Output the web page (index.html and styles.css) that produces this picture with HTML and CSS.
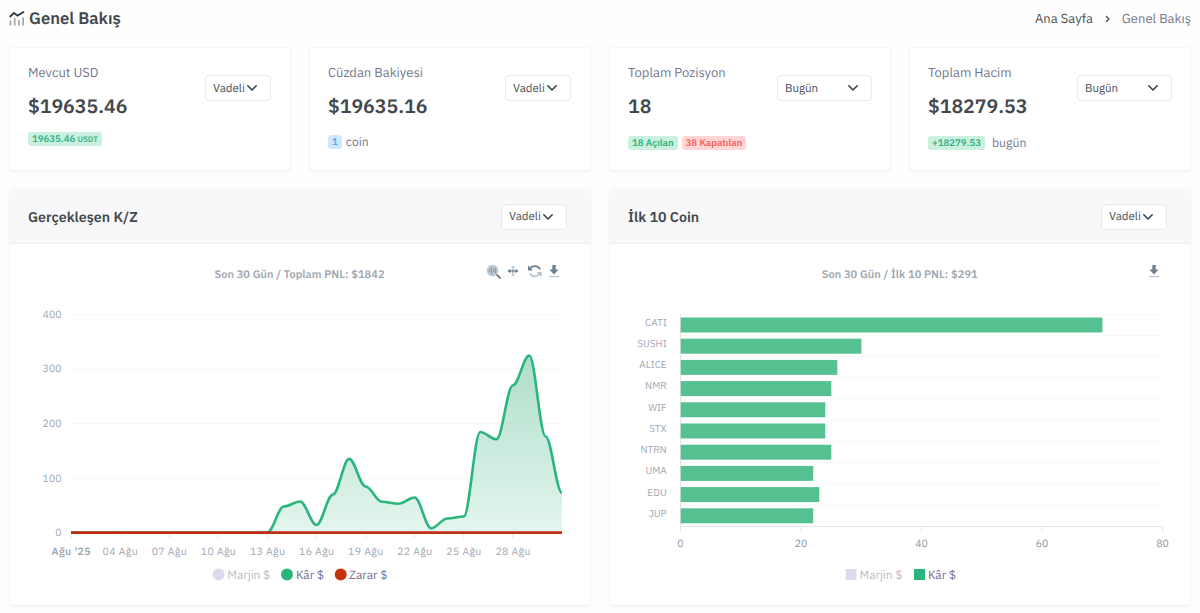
FILE: index.html
```html
<!DOCTYPE html>
<html lang="tr">
<head>
   <meta charset="UTF-8">
   <meta name="viewport" content="width=device-width, initial-scale=1.0">
   <title>Genel Bakış</title>
   <link rel="stylesheet" href="styles.css">
</head>

<body>
   <svg class="defs" width="0" height="0">
      <symbol id="chevron" viewBox="0 0 10 6">
         <path d="M.8 .8L5 5l4.200-4.200" fill="none" stroke="#343a40" stroke-width="1.5" stroke-linecap="round" stroke-linejoin="round"/>
      </symbol>
      <symbol id="download" viewBox="0 0 12 14">
         <path d="M4.300 1h3.400v4.500h3L6 10.500 1.300 5.500h3z" fill="#6e8192"/>
         <path d="M1 12.500h10" stroke="#b7c3cd" stroke-width="1.300"/>
      </symbol>
   </svg>

   <header class="top">
      <h1>
         <svg class="logo" width="16" height="15" viewBox="0 0 16 15">
            <path d="M.7 6L5 2l3.500 2.600L15 .8" fill="none" stroke="#343a40" stroke-width="1.800"/>
            <path d="M1.500 9.500v5M5.700 7v7.500M9.900 9v5.500M14.100 6.500v8" stroke="#a3a5a8" stroke-width="1.700"/>
         </svg>
         <span>Genel Bakış</span>
      </h1>
      <nav class="crumbs">
         <a>Ana Sayfa</a>
         <svg width="5" height="8" viewBox="0 0 5 8"><path d="M1 1l3 3-3 3" fill="none" stroke="#495057" stroke-width="1.300"/></svg>
         <span>Genel Bakış</span>
      </nav>
   </header>

   <main>
      <section class="cards">
         <div class="card">
            <div class="info">
               <p class="label">Mevcut USD</p>
               <h2>$19635.46</h2>
               <div class="extra raised"><span class="badge green">19635.46 <small>USDT</small></span></div>
            </div>
            <div class="select"><span>Vadeli</span><svg class="arrow"><use href="#chevron"/></svg></div>
         </div>
         <div class="card">
            <div class="info">
               <p class="label">Cüzdan Bakiyesi</p>
               <h2>$19635.16</h2>
               <div class="extra coin"><span class="badge blue">1</span><span class="muted">coin</span></div>
            </div>
            <div class="select"><span>Vadeli</span><svg class="arrow"><use href="#chevron"/></svg></div>
         </div>
         <div class="card">
            <div class="info">
               <p class="label">Toplam Pozisyon</p>
               <h2>18</h2>
               <div class="extra"><span class="badge green">18 Açılan</span><span class="badge red">38 Kapatılan</span></div>
            </div>
            <div class="select wide"><span>Bugün</span><svg class="arrow"><use href="#chevron"/></svg></div>
         </div>
         <div class="card">
            <div class="info">
               <p class="label">Toplam Hacim</p>
               <h2>$18279.53</h2>
               <div class="extra today"><span class="badge green">+18279.53</span><span class="muted">bugün</span></div>
            </div>
            <div class="select wide"><span>Bugün</span><svg class="arrow"><use href="#chevron"/></svg></div>
         </div>
      </section>

      <section class="panels">
         <div class="panel">
            <div class="panel-head">
               <h3>Gerçekleşen K/Z</h3>
               <div class="select"><span>Vadeli</span><svg class="arrow"><use href="#chevron"/></svg></div>
            </div>
            <svg class="chart" width="580" height="360" viewBox="0 0 580 360">
               <defs>
                  <linearGradient id="fade" x1="0" y1="0" x2="0" y2="1">
                     <stop offset="0" stop-color="#2ca673" stop-opacity=".38"/>
                     <stop offset="1" stop-color="#2ab57d" stop-opacity=".13"/>
                  </linearGradient>
               </defs>
               <text class="title" x="289.500" y="33.400" textLength="170">Son 30 Gün / Toplam PNL: $1842</text>

               <!-- toolbar -->
               <g class="tools">
                  <circle cx="482.500" cy="25.500" r="5.800" fill="#bac6cf"/>
                  <path d="M479.500 24v3M481.500 22.500v6M483.500 24v3M485.500 23v5" stroke="#8798a6"/>
                  <path d="M486.500 29.500l4 4" stroke="#536373" stroke-width="1.700"/>
                  <path d="M503 20.500l2 2.500h-4zM503 31.500l2-2.500h-4z" fill="#bac6cf"/>
                  <path d="M498 26h10" stroke="#6e8192" stroke-width="1.300"/>
                  <path d="M503 23.500v5" stroke="#6e8192"/>
                  <path d="M497.500 26l3-2.300v4.600zM508.500 26l-3-2.300v4.600z" fill="#6e8192"/>
                  <path d="M519.500 24.500c2-4.200 8-4.800 10.800-.3" fill="none" stroke="#6e8192" stroke-width="1.700"/>
                  <path d="M518 20.500v5h5z" fill="#6e8192"/>
                  <path d="M530 28c-2 4.200-7.500 4.500-10.300.5" fill="none" stroke="#b7c3cd" stroke-width="1.700"/>
                  <path d="M531.700 32v-5h-5z" fill="#b7c3cd"/>
                  <use href="#download" x="538" y="19" width="12" height="14"/>
               </g>

               <path class="grid" d="M61 69.500h491M61 124h491M61 178.500h491M61 233h491"/>
               <g class="ticks end">
                  <text x="51.500" y="72.700">400</text>
                  <text x="51.500" y="127.400">300</text>
                  <text x="51.500" y="182">200</text>
                  <text x="51.500" y="236.700">100</text>
                  <text x="51.500" y="291.200">0</text>
               </g>

               <path fill="url(#fade)" d="M257.400 287.500C263.100 287.500 268.100 261.500 273.800 261.500S284.400 256.500 290.100 256.500S300.800 280 306.500 280S317.200 249.500 322.900 249.500S333.500 213.900 339.200 213.900S349.900 241.500 355.600 241.500S366.300 256.800 372 256.800S382.600 258.700 388.300 258.700S399 252.500 404.700 252.500S415.400 283.300 421.100 283.300S431.700 273.500 437.400 273.500S448.100 271.500 453.800 271.500S464.500 187 470.200 187S480.800 194.300 486.500 194.300S497.200 140.200 502.900 140.200S513.600 110.500 519.300 110.500S529.900 191.500 535.600 191.500S546.300 247.800 552 247.800V287.500z"/>
               <path class="profit" d="M61 287.500H257.400C263.100 287.500 268.100 261.500 273.800 261.500S284.400 256.500 290.100 256.500S300.800 280 306.500 280S317.200 249.500 322.900 249.500S333.500 213.900 339.200 213.900S349.900 241.500 355.600 241.500S366.300 256.800 372 256.800S382.600 258.700 388.300 258.700S399 252.500 404.700 252.500S415.400 283.300 421.100 283.300S431.700 273.500 437.400 273.500S448.100 271.500 453.800 271.500S464.500 187 470.200 187S480.800 194.300 486.500 194.300S497.200 140.200 502.900 140.200S513.600 110.500 519.300 110.500S529.900 191.500 535.600 191.500S546.300 247.800 552 247.800"/>
               <path class="loss" d="M61 287.600h491"/>
               <path class="axis" d="M61 289v4M110.100 289v4M159.200 289v4M208.300 289v4M257.400 289v4M306.500 289v4M355.600 289v4M404.700 289v4M453.800 289v4M502.900 289v4"/>

               <g class="ticks">
                  <text class="month" x="61" y="310" textLength="39">Ağu '25</text>
                  <text x="110.100" y="310" textLength="35">04 Ağu</text>
                  <text x="159.200" y="310" textLength="35">07 Ağu</text>
                  <text x="208.300" y="310" textLength="35">10 Ağu</text>
                  <text x="257.400" y="310" textLength="35">13 Ağu</text>
                  <text x="306.500" y="310" textLength="35">16 Ağu</text>
                  <text x="355.600" y="310" textLength="35">19 Ağu</text>
                  <text x="404.700" y="310" textLength="35">22 Ağu</text>
                  <text x="453.800" y="310" textLength="35">25 Ağu</text>
                  <text x="502.900" y="310" textLength="35">28 Ağu</text>
               </g>

               <g class="legend">
                  <g class="off">
                     <circle cx="208.500" cy="329.500" r="6" fill="#b9b3dd"/>
                     <text x="217.300" y="334" textLength="43">Marjin $</text>
                  </g>
                  <circle cx="277" cy="329.500" r="6" fill="#2ab57d"/>
                  <text x="286" y="334" textLength="28">Kâr $</text>
                  <circle cx="330.700" cy="329.500" r="6" fill="#c7330d"/>
                  <text x="339" y="334" textLength="38.500">Zarar $</text>
               </g>
            </svg>
         </div>

         <div class="panel">
            <div class="panel-head">
               <h3>İlk 10 Coin</h3>
               <div class="select"><span>Vadeli</span><svg class="arrow"><use href="#chevron"/></svg></div>
            </div>
            <svg class="chart" width="580" height="360" viewBox="0 0 580 360">
               <text class="title" x="289.700" y="33.400" textLength="156">Son 30 Gün / İlk 10 PNL: $291</text>
               <use href="#download" x="538" y="19" width="12" height="14"/>

               <path class="grid" d="M70.500 69.200h482M70.500 90.400h482M70.500 111.600h482M70.500 132.800h482M70.500 154h482M70.500 175.200h482M70.500 196.400h482M70.500 217.600h482M70.500 238.800h482M70.500 260h482"/>
               <path class="axis" d="M70.500 69v213M70.500 281.500h482M70.500 281v6M191 281v6M311.500 281v6M432 281v6M552.500 281v6"/>

               <g class="bars">
                  <rect x="70.700" y="72.500" width="421.700" height="15"/>
                  <rect x="70.700" y="93.700" width="180.700" height="15"/>
                  <rect x="70.700" y="114.900" width="156.600" height="15"/>
                  <rect x="70.700" y="136.100" width="150.600" height="15"/>
                  <rect x="70.700" y="157.300" width="144.600" height="15"/>
                  <rect x="70.700" y="178.500" width="144.600" height="15"/>
                  <rect x="70.700" y="199.700" width="150.600" height="15"/>
                  <rect x="70.700" y="220.900" width="132.500" height="15"/>
                  <rect x="70.700" y="242.100" width="138.600" height="15"/>
                  <rect x="70.700" y="263.300" width="132.500" height="15"/>
               </g>

               <g class="coins">
                  <text x="56.700" y="81">CATI</text>
                  <text x="56.700" y="102.200">SUSHI</text>
                  <text x="56.700" y="123.400">ALICE</text>
                  <text x="56.700" y="144.400">NMR</text>
                  <text x="56.700" y="165.800">WIF</text>
                  <text x="56.700" y="187">STX</text>
                  <text x="56.700" y="208.200">NTRN</text>
                  <text x="56.700" y="229.400">UMA</text>
                  <text x="56.700" y="250.600">EDU</text>
                  <text x="56.700" y="271.800">JUP</text>
               </g>
               <g class="ticks dark">
                  <text x="70.500" y="302">0</text>
                  <text x="191" y="302">20</text>
                  <text x="311.500" y="302">40</text>
                  <text x="432" y="302">60</text>
                  <text x="552.500" y="302">80</text>
               </g>

               <g class="legend">
                  <g class="off">
                     <rect x="235.700" y="324" width="10.800" height="11" fill="#b9b3dd"/>
                     <text x="249.500" y="334" textLength="43">Marjin $</text>
                  </g>
                  <rect x="304" y="324" width="11" height="11" fill="#2ab57d"/>
                  <text x="318" y="334" textLength="28">Kâr $</text>
               </g>
            </svg>
         </div>
      </section>
   </main>
</body>
</html>
```

FILE: styles.css
```css
* {
   box-sizing: border-box;
}

body {
   margin: 0;
   padding: 0 9px;
   height: 613px;
   overflow: hidden;
   background: #fefefe;
   color: #495057;
   font-family: 'IBM Plex Sans', Roboto, 'Noto Sans', sans-serif;
   font-size: 13px;
   text-rendering: geometricPrecision;
}

h1,
h2,
h3,
p {
   margin: 0;
}

.defs {
   display: block;
}

.top {
   display: flex;
   justify-content: space-between;
   align-items: center;
   height: 37px;
}

h1 {
   display: flex;
   gap: 4px;
   font-size: 16.7px;
   font-weight: 600;
   line-height: 19px;
   color: #43484d;
}

.logo {
   margin-top: 2px;
}

.crumbs {
   display: flex;
   align-items: center;
   gap: 12px;
   color: #74788d;
}

.crumbs a {
   color: #495057;
}

.cards {
   display: grid;
   grid-template-columns: repeat(4, 1fr);
   gap: 18px;
   margin-top: 10px;
}

.card,
.panel {
   background: #fff;
   border: 1px solid #f5f5f7;
   border-radius: 4px;
   box-shadow: 0 1px 2px rgba(230, 230, 235, 0.4);
}

.card {
   display: flex;
   justify-content: space-between;
   height: 124px;
   padding: 16px 19px 0 18px;
}

.label {
   line-height: 18px;
   color: #74788d;
}

h2 {
   margin-top: 12px;
   font-size: 19.5px;
   font-weight: 600;
   line-height: 26px;
   color: #43484d;
}

.extra {
   display: flex;
   align-items: center;
   gap: 4px;
   height: 18px;
   margin-top: 14px;
}

.raised {
   margin-top: 10px;
}

.coin {
   margin-top: 13px;
}

.today {
   gap: 7px;
}

.muted {
   color: #74788d;
   font-size: 12.3px;
}

.badge {
   height: 14px;
   padding: 0 4px;
   border-radius: 3px;
   font-size: 9.6px;
   font-weight: 600;
   line-height: 14px;
   white-space: nowrap;
}

.badge small {
   font-size: 8px;
}

.green {
   background: #caf0df;
   color: #34b281;
}

.blue {
   background: #cfe8ff;
   color: #4ba6ef;
}

.red {
   background: #ffd5d5;
   color: #fd625e;
}

.select {
   display: flex;
   align-items: center;
   width: 66px;
   height: 26px;
   padding-left: 7px;
   background: #fff;
   border: 1px solid #e9e9ef;
   border-radius: 4px;
   font-size: 11.5px;
}

.select span {
   width: 31px;
}

.card .select {
   margin-top: 11px;
}

.arrow {
   width: 10px;
   height: 6px;
   margin-left: 3px;
}

.card .wide {
   width: 95px;
   margin-right: -1px;
}

.wide .arrow {
   margin-left: 32px;
}

.panels {
   display: grid;
   grid-template-columns: 1fr 1fr;
   gap: 18px;
   margin-top: 18px;
}

.panel-head {
   display: flex;
   justify-content: space-between;
   align-items: center;
   height: 54px;
   margin-bottom: 1px;
   padding: 0 23px 0 18px;
   background: #f8f8fa;
   border-bottom: 1px solid #efeff2;
}

h3 {
   padding-bottom: 1px;
   font-size: 14.2px;
   font-weight: 600;
   color: #43484d;
}

.chart {
   display: block;
}

.chart text {
   fill: #a0a7b1;
   font-size: 11px;
}

.chart .title {
   font-weight: 600;
   text-anchor: middle;
}

.ticks {
   text-anchor: middle;
}

.chart .ticks text {
   font-size: 10.5px;
}

.chart .month {
   font-weight: 600;
}

.end,
.coins {
   text-anchor: end;
}

.chart .coins text {
   font-size: 10px;
}

.chart .dark text {
   fill: #8f959f;
}

.grid {
   fill: none;
   stroke: #f8f8f9;
}

.axis {
   fill: none;
   stroke: #e6e6e9;
}

.profit,
.loss {
   fill: none;
   stroke: #2ab57d;
   stroke-width: 2.6;
}

.loss {
   stroke: #c03010;
}

.bars {
   fill: #55c191;
}

.chart .legend text {
   fill: #74708d;
   font-size: 12px;
}

.off {
   opacity: 0.48;
}
```
